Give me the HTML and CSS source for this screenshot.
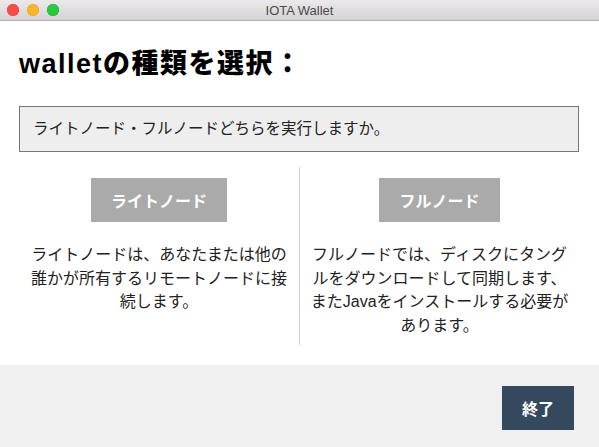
FILE: index.html
```html
<!DOCTYPE html>
<html lang="ja">
<head>
  <meta charset="UTF-8" />
  <meta name="viewport" content="width=device-width, initial-scale=1.0" />
  <title>IOTA Wallet</title>
  <link rel="stylesheet" href="styles.css">
</head>
<body>
  <div class="window">
    <div class="titlebar">
      <div class="lights">
        <span class="light red"></span>
        <span class="light yellow"></span>
        <span class="light green"></span>
      </div>
      <span class="title">IOTA Wallet</span>
    </div>

    <div class="content">
      <h1>walletの種類を選択：</h1>
      <div class="question">ライトノード・フルノードどちらを実行しますか。</div>

      <div class="options">
        <div class="option">
          <button class="node-button" id="lightNodeButton">ライトノード</button>
          <p>ライトノードは、あなたまたは他の誰かが所有するリモートノードに接続します。</p>
        </div>
        <div class="option">
          <button class="node-button" id="fullNodeButton">フルノード</button>
          <p>フルノードでは、ディスクにタングルをダウンロードして同期します、またJavaをインストールする必要があります。</p>
        </div>
      </div>
    </div>

    <div class="footer">
      <button class="quit-button" id="quitButton">終了</button>
    </div>
  </div>
</body>
</html>
```

FILE: styles.css
```css
body {
  margin: 0;
  padding: 0;
  font-family: "Liberation Sans", "Noto Sans CJK JP", sans-serif;
  color: #222;
  background: #fff;
}

.window {
  width: 599px;
  height: 447px;
  display: flex;
  flex-direction: column;
  overflow: hidden;
}

.titlebar {
  position: relative;
  height: 20px;
  background: linear-gradient(to bottom, #ebe9eb, #d5d3d5);
  border-bottom: 1px solid #b3b1b3;
  display: flex;
  align-items: center;
  justify-content: center;
}

.lights {
  position: absolute;
  left: 7px;
  top: 4px;
  display: flex;
  gap: 8px;
}

.light {
  width: 12px;
  height: 12px;
  border-radius: 50%;
  display: block;
}

.red {
  background: #fc4a47;
  box-shadow: inset 0 0 0 0.5px #e0443e;
}

.yellow {
  background: #fdb52a;
  box-shadow: inset 0 0 0 0.5px #dea123;
}

.green {
  background: #2ac940;
  box-shadow: inset 0 0 0 0.5px #1aab29;
}

.title {
  font-size: 13px;
  color: #4a4a4a;
}

.content {
  padding: 0 20px 0 19px;
}

h1 {
  font-size: 27px;
  font-weight: 900;
  letter-spacing: 1.5px;
  line-height: 30px;
  margin: 28px 0 27px;
  color: #000;
}

.question {
  background: #eee;
  border: 1px solid #777;
  padding: 11px 13px;
  font-size: 15.5px;
  line-height: 22px;
}

.options {
  display: grid;
  grid-template-columns: 1fr 1fr;
  margin-top: 15px;
}

.option {
  display: flex;
  flex-direction: column;
  align-items: center;
  padding: 11px 10px 8px;
  text-align: center;
}

.option + .option {
  border-left: 1px solid #ccc;
}

.node-button {
  height: 44px;
  padding: 0 20px;
  background: #aaa;
  color: #fff;
  border: none;
  font-family: inherit;
  font-size: 16px;
  font-weight: bold;
  cursor: pointer;
}

.option p {
  margin: 21px 0 0;
  font-size: 16px;
  line-height: 23.5px;
}

.footer {
  margin-top: 20px;
  flex: 1;
  background: #f0f0f0;
  display: flex;
  justify-content: flex-end;
  align-items: flex-start;
  padding: 21px 25px 0 0;
}

.quit-button {
  width: 72px;
  height: 44px;
  background: #34495e;
  color: #fff;
  border: none;
  font-family: inherit;
  font-size: 16px;
  font-weight: bold;
  cursor: pointer;
}
```
